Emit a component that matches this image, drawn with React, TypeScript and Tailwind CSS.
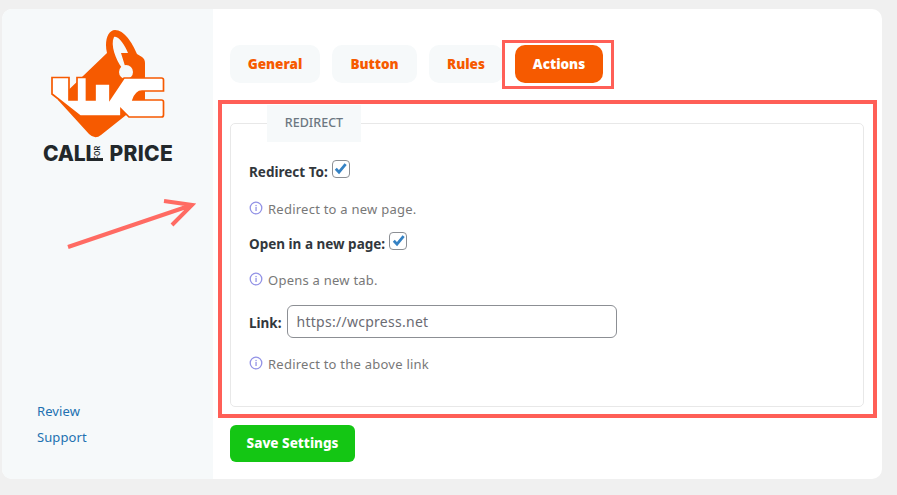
import React from "react";

const font = { fontFamily: '"Noto Sans", sans-serif' };

function Info() {
  return (
    <svg width="14" height="14" viewBox="0 0 14 14" className="shrink-0" fill="none">
      <circle cx="7" cy="7" r="5.8" stroke="#9393e6" strokeWidth="1.3" />
      <rect x="6.4" y="6" width="1.3" height="4" fill="#9393e6" />
      <rect x="6.4" y="3.9" width="1.3" height="1.3" fill="#9393e6" />
    </svg>
  );
}

function Check() {
  return (
    <span className="inline-flex items-center justify-center w-[18px] h-[18px] border border-[#8c8f94] rounded-[4px] bg-white shrink-0">
      <svg width="15" height="15" viewBox="0 0 14 14" fill="none">
        <path d="M2.6 7.2 L5.6 10.4 L11.8 3" stroke="#3582c4" strokeWidth="2.6" />
      </svg>
    </span>
  );
}

function Hint({ children }: { children: React.ReactNode }) {
  return (
    <div className="flex items-center gap-[5px] text-[13px] text-[#787878] leading-none tracking-[0.24px]">
      <span className="-mt-[4px]"><Info /></span>
      <span>{children}</span>
    </div>
  );
}

function Logo() {
  return (
    <div className="w-[131px]">
      <svg width="116" height="110" viewBox="50 29 116 110" className="ml-[8px] block">
        <path
          d="M107 53 C104 41 108 30 115 30 C124 30 132 42 137 54 L142 57 Q145 59 145 63 L145 100 L101 135 Q95 140 89 134 L58 100 Z"
          fill="#f65a00"
        />
        <path d="M114 37 C118 35 125 45 128 53 L121 53 L125 66 L122 68 C116 60 110 45 114 37 Z" fill="#f6f9fa" />
        <circle cx="126" cy="72" r="7" fill="#f6f9fa" />
        <path
          d="M52 77.500 H69 V100 H77 V77.500 H86.500 V100 H95 V84 H110 V99 L124 78 H161.500 Q163.500 78 163.500 80 V91 H142 Q136 91 133 100 H161.500 Q163.500 100 163.500 102 V115 Q163.500 117 161.500 117 H129 L121 109 V116 H80 L52 94 Z"
          fill="#ffffff"
          stroke="#f65a00"
          strokeWidth="1.700"
        />
      </svg>
      <div
        className="mt-[7px] flex items-end text-[#22282b] font-extrabold text-[21px] leading-[16px] h-[16px] ml-[1px]"
        style={{ fontFamily: "Inter, sans-serif" }}
      >
        <span className="w-[47px] tracking-[-0.2px]">CALL</span>
        <span className="relative w-[13px] h-[16px] block">
          <span className="absolute left-0 bottom-[1px] w-[13px] h-[3px] bg-[#22282b]" />
          <span className="absolute left-[4px] top-[0px] text-[7px] leading-[8px] font-semibold [writing-mode:vertical-rl] rotate-180">FOR</span>
        </span>
        <span className="ml-[7px] tracking-[0.3px]">PRICE</span>
      </div>
    </div>
  );
}

export default function App() {
  return (
    <div className="w-[897px] h-[495px] bg-[#f0f0f0] pt-[9px] pl-[2px] relative overflow-hidden" style={font}>
      <div className="w-[880px] h-[470px] bg-white rounded-[10px] overflow-hidden flex">
        <aside className="w-[211px] bg-[#f6f9fa] flex flex-col justify-between pl-[35px] pb-[33px] pt-[20px] shrink-0">
          <div className="ml-[5px]"><Logo /></div>
          <div className="flex flex-col gap-[8px] text-[13px] leading-[18px] text-[#2271b1] tracking-[0.1px]">
            <span>Review</span>
            <span>Support</span>
          </div>
        </aside>
        <main className="flex-1 pl-[17px] pt-[36px]">
          <div className="flex gap-[12px] text-[13.500px] font-black text-[#f65a00]">
            <div className="w-[90px] h-[38px] rounded-[10px] bg-[#f6f9fa] flex items-center justify-center">General</div>
            <div className="w-[85px] h-[38px] rounded-[10px] bg-[#f6f9fa] flex items-center justify-center">Button</div>
            <div className="w-[74px] h-[38px] rounded-[10px] bg-[#f6f9fa] flex items-center justify-center">Rules</div>
            <div className="w-[88px] h-[38px] rounded-[10px] bg-[#f65a00] text-white flex items-center justify-center">Actions</div>
          </div>
          <section className="mt-[40px] w-[634px] h-[284px] border border-[#e8e8e8] rounded-[5px]">
            <div className="-mt-[19px] ml-[36px] w-[94px] h-[37px] bg-[#f6f9fa] flex items-center justify-center text-[12.500px] font-medium text-[#6c7781]">
              REDIRECT
            </div>
            <div className="pl-[18px] pt-[20px] text-[13.500px] text-[#32373c]">
              <div className="h-[20px] flex items-center gap-[4px] font-bold">Redirect To: <span className="-mt-[3px]"><Check /></span></div>
              <div className="h-[17px] mt-[19px] flex items-center"><Hint>Redirect to a new page.</Hint></div>
              <div className="h-[20px] mt-[16px] flex items-center gap-[4px] font-bold">Open in a new page: <span className="-mt-[3px]"><Check /></span></div>
              <div className="h-[17px] mt-[18px] flex items-center"><Hint>Opens a new tab.</Hint></div>
              <div className="mt-[16px] flex items-center gap-[5px] font-bold">
                <span className="mt-[3px]">Link:</span>
                <div className="w-[330px] h-[33px] border border-[#8c8f94] rounded-[6px] flex items-center pl-[9px] text-[14px] font-normal text-[#6b6b73] tracking-[0.27px]">
                  https://wcpress.net
                </div>
              </div>
              <div className="h-[17px] mt-[18px] flex items-center"><Hint>Redirect to the above link</Hint></div>
            </div>
          </section>
          <button className="mt-[18px] w-[125px] h-[37px] rounded-[6px] bg-[#14c614] text-white text-[13.500px] font-extrabold">Save Settings</button>
        </main>
      </div>

      <div className="absolute left-[502px] top-[40px] w-[112px] h-[49px] border-[3px] border-[#ff5f57]" />
      <div className="absolute left-[218px] top-[100px] w-[659px] h-[318px] border-[4px] border-[#ff5f57]" />
      <svg className="absolute left-[60px] top-[195px]" width="140" height="60" viewBox="60 195 140 60" fill="none">
        <path d="M68 247 L192 205 M164 201 L192 205 L172 225" stroke="#ff6b63" strokeWidth="4" />
      </svg>
    </div>
  );
}
